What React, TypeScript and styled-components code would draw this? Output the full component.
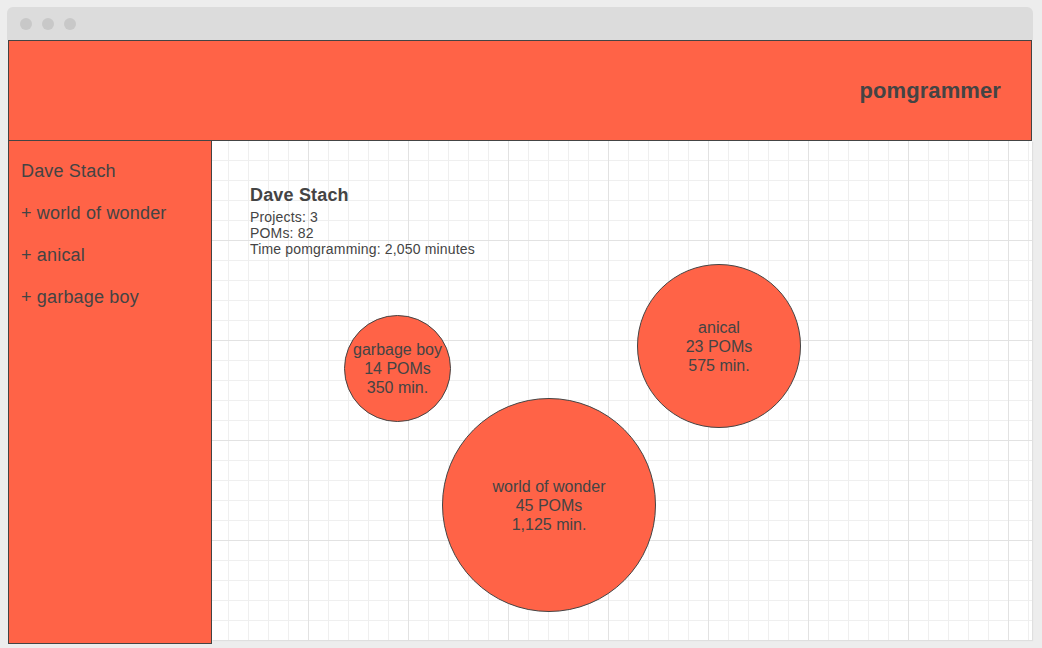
import {FC} from 'react';
import styled, {createGlobalStyle} from 'styled-components';

type Project = {name: string; poms: number; size: number; left: number; top: number};

const projects: Project[] = [
    {name: 'world of wonder', poms: 45, size: 214, left: 230, top: 257},
    {name: 'anical', poms: 23, size: 164, left: 425, top: 123},
    {name: 'garbage boy', poms: 14, size: 107, left: 132, top: 174},
];

const totalPoms = projects.reduce((sum, p) => sum + p.poms, 0);

const App: FC = () => <>
    <GlobalStyle/>
    <Window>
        <TitleBar>
            <Dot/>
            <Dot/>
            <Dot/>
        </TitleBar>
        <Content>
            <Header>
                <Brand>pomgrammer</Brand>
            </Header>
            <Body>
                <Sidebar>
                    <SideItem>Dave Stach</SideItem>
                    {projects.map(p => <SideItem key={p.name}>+ {p.name}</SideItem>)}
                </Sidebar>
                <Canvas>
                    <Stats>
                        <UserName>Dave Stach</UserName>
                        <StatLine>Projects: {projects.length}</StatLine>
                        <StatLine>POMs: {totalPoms}</StatLine>
                        <StatLine>Time pomgramming: {(totalPoms * 25).toLocaleString('en-US')} minutes</StatLine>
                    </Stats>
                    {projects.map(p => (
                        <Bubble key={p.name} $size={p.size} $left={p.left} $top={p.top}>
                            <span>{p.name}</span>
                            <span>{p.poms} POMs</span>
                            <span>{(p.poms * 25).toLocaleString('en-US')} min.</span>
                        </Bubble>
                    ))}
                </Canvas>
            </Body>
        </Content>
    </Window>
</>

const GlobalStyle = createGlobalStyle`
    * { box-sizing: border-box; }
    body {
        margin: 0;
        background: #ededed;
        font-family: "Liberation Sans", Arial, sans-serif;
        letter-spacing: 0.17px;
        color: #444;
    }
`;

const Window = styled.div`
    width: 1026px;
    margin: 7px 0 0 7px;
`;

const TitleBar = styled.div`
    height: 33px;
    background: #dcdcdc;
    border-radius: 6px 6px 0 0;
    display: flex;
    align-items: center;
    gap: 10px;
    padding-left: 13px;
`;

const Dot = styled.span`
    width: 12px;
    height: 12px;
    border-radius: 50%;
    background: #c8c8c8;
`;

const Content = styled.div`
    margin: 0 1px;
`;

const Header = styled.header`
    height: 101px;
    background: #ff6347;
    border: 1px solid #444;
    display: flex;
    justify-content: flex-end;
    align-items: center;
    padding-right: 30px;
`;

const Brand = styled.h1`
    margin: 0;
    font-size: 22px;
    font-weight: bold;
    letter-spacing: 0.1px;
    color: #444;
`;

const Body = styled.div`
    display: flex;
    align-items: flex-start;
`;

const Sidebar = styled.nav`
    flex: 0 0 204px;
    height: 504px;
    margin-top: -1px;
    background: #ff6347;
    border: 1px solid #444;
    padding: 9px 12px;
`;

const SideItem = styled.div`
    font-size: 18px;
    line-height: 42px;
    color: #444;
`;

const Canvas = styled.main`
    position: relative;
    flex: 1;
    height: 499px;
    padding: 44px 38px;
    background-color: #fff;
    background-image:
        linear-gradient(to right, #e2e2e2 1px, transparent 1px),
        linear-gradient(to bottom, #e2e2e2 1px, transparent 1px),
        linear-gradient(to right, #efefef 1px, transparent 1px),
        linear-gradient(to bottom, #efefef 1px, transparent 1px);
    background-size: 100px 100px, 100px 100px, 20px 20px, 20px 20px;
    background-position: -4px -1px;
    box-shadow: 1px 1px 1px rgba(0, 0, 0, 0.06);
`;

const Stats = styled.section`
    display: flex;
    flex-direction: column;
`;

const UserName = styled.h2`
    margin: 0 0 3px;
    font-size: 18px;
    line-height: 21px;
    font-weight: bold;
`;

const StatLine = styled.div`
    font-size: 14px;
    line-height: 16px;
`;

const Bubble = styled.div<{$size: number; $left: number; $top: number}>`
    position: absolute;
    left: ${p => p.$left}px;
    top: ${p => p.$top}px;
    width: ${p => p.$size}px;
    height: ${p => p.$size}px;
    border-radius: 50%;
    background: #ff6347;
    border: 1px solid #444;
    display: flex;
    flex-direction: column;
    align-items: center;
    justify-content: center;
    font-size: 16px;
    line-height: 19px;
    letter-spacing: 0;
    color: #444;
    text-align: center;
`;

export default App;
